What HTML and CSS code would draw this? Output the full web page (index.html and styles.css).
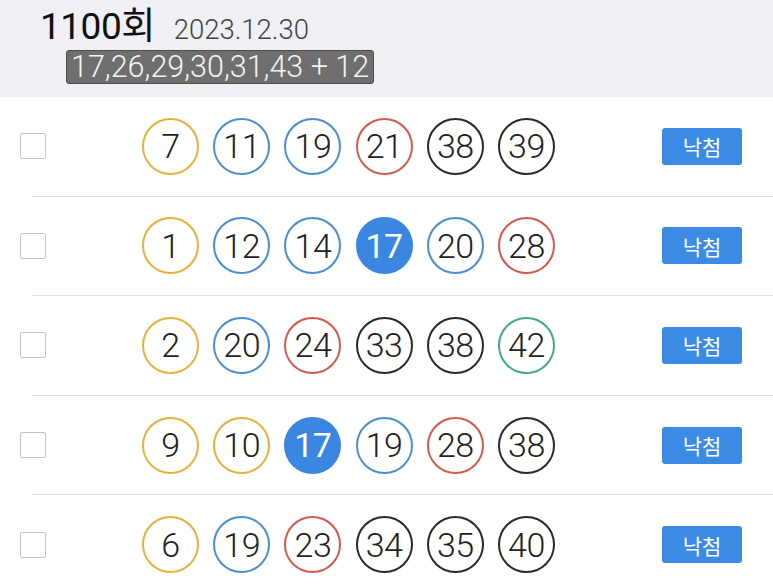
FILE: index.html
```html
<!DOCTYPE html>
<html lang="ko">
<head>
<meta charset="utf-8">
<link rel="stylesheet" href="styles.css">
</head>
<body>
<header class="head">
  <div class="title-line">
    <span class="round">1100회</span>
    <span class="date">2023.12.30</span>
  </div>
  <div class="chip">17,26,29,30,31,43 + 12</div>
</header>
<ul class="list">
  <li class="row">
    <span class="check"></span>
    <div class="balls">
      <span class="ball y">7</span><span class="ball b">11</span><span class="ball b">19</span><span class="ball r">21</span><span class="ball k">38</span><span class="ball k">39</span>
    </div>
    <span class="btn">낙첨</span>
  </li>
  <li class="row">
    <span class="check"></span>
    <div class="balls">
      <span class="ball y">1</span><span class="ball b">12</span><span class="ball b">14</span><span class="ball hit">17</span><span class="ball b">20</span><span class="ball r">28</span>
    </div>
    <span class="btn">낙첨</span>
  </li>
  <li class="row">
    <span class="check"></span>
    <div class="balls">
      <span class="ball y">2</span><span class="ball b">20</span><span class="ball r">24</span><span class="ball k">33</span><span class="ball k">38</span><span class="ball g">42</span>
    </div>
    <span class="btn">낙첨</span>
  </li>
  <li class="row">
    <span class="check"></span>
    <div class="balls">
      <span class="ball y">9</span><span class="ball y">10</span><span class="ball hit">17</span><span class="ball b">19</span><span class="ball r">28</span><span class="ball k">38</span>
    </div>
    <span class="btn">낙첨</span>
  </li>
  <li class="row">
    <span class="check"></span>
    <div class="balls">
      <span class="ball y">6</span><span class="ball b">19</span><span class="ball r">23</span><span class="ball k">34</span><span class="ball k">35</span><span class="ball k">40</span>
    </div>
    <span class="btn">낙첨</span>
  </li>
</ul>
</body>
</html>
```
FILE: styles.css
```css
* { box-sizing: border-box; }
html, body {
  margin: 0;
  padding: 0;
  background: #ffffff;
  font-family: "Roboto", "Liberation Sans", "Noto Sans CJK KR", sans-serif;
  overflow: hidden;
}
.head {
  background: #efeff4;
  height: 97px;
  padding: 5px 0 0 40px;
}
.title-line {
  display: flex;
  align-items: baseline;
  height: 45px;
  line-height: 44px;
}
.round {
  font-size: 37px;
  color: #111;
  letter-spacing: -0.5px;
  font-family: "Roboto", "Noto Sans CJK KR", sans-serif;
}
.date {
  font-size: 27.5px;
  font-weight: 300;
  color: #444;
  margin-left: 19px;
}
.chip {
  display: inline-block;
  margin-left: 26px;
  height: 34px;
  line-height: 32px;
  padding: 0 4px;
  background: #6f6f6f;
  border: 1px solid #4d4d4d;
  border-radius: 3px;
  color: #f4f4f4;
  font-size: 30.5px;
  font-weight: 300;
}
.list {
  list-style: none;
  margin: 0;
  padding: 0;
}
.row {
  margin-left: 32px;
  height: 99.6px;
  border-bottom: 1px solid #e2e2e2;
  display: flex;
  align-items: center;
}
.check {
  width: 26px;
  height: 26px;
  margin-left: -12px;
  border: 1.5px solid #c4c4c4;
  border-radius: 2px;
  flex: none;
}
.balls {
  display: flex;
  gap: 14.2px;
  margin-left: 96px;
}
.ball {
  width: 57px;
  height: 57px;
  border-radius: 50%;
  border: 2px solid #333;
  display: flex;
  align-items: center;
  justify-content: center;
  font-size: 34px;
  font-weight: 300;
  color: #222;
  letter-spacing: -0.5px;
}
.ball.y { border-color: #e8b13b; }
.ball.b { border-color: #4b8fd2; }
.ball.r { border-color: #d55a4c; }
.ball.k { border-color: #2a2a2a; }
.ball.g { border-color: #43aa86; }
.ball.hit {
  background: #3a86e0;
  border-color: #3a86e0;
  color: #fff;
  font-weight: 400;
}
.btn {
  margin-left: auto;
  margin-right: 31px;
  width: 80px;
  height: 37px;
  background: #3b8ae4;
  border-radius: 3px;
  color: #fff;
  font-size: 21px;
  display: flex;
  align-items: center;
  justify-content: center;
  font-family: "Noto Sans CJK KR", sans-serif;
}
```
